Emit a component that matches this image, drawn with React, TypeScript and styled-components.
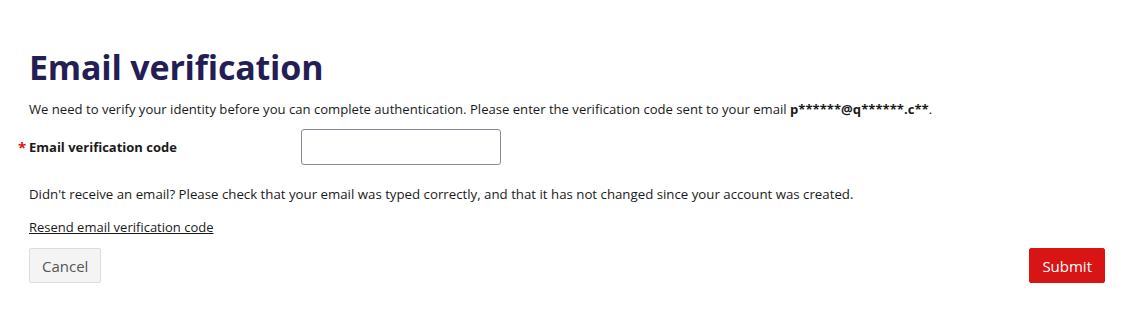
import React from 'react';
import styled, { createGlobalStyle } from 'styled-components';

const GlobalStyle = createGlobalStyle`
  body {
    margin: 0;
    background: #ffffff;
    font-family: "Segoe UI", "Open Sans", "Liberation Sans", sans-serif;
    color: #1a1a1a;
  }
`;

const Page = styled.div`
  padding: 41px 30px 0 29px;
  width: 1135px;
  box-sizing: border-box;
`;

const Title = styled.h1`
  margin: 0;
  font-size: 34px;
  letter-spacing: -0.2px;
  line-height: 52px;
  font-weight: 700;
  color: #241e55;
`;

const Intro = styled.p`
  margin: 6px 0 0;
  font-size: 13.1px;
  line-height: 20px;
`;

const Row = styled.div`
  display: flex;
  align-items: center;
  margin-top: 10px;
`;

const Label = styled.label`
  position: relative;
  width: 272px;
  font-size: 13px;
  font-weight: 700;

  &::before {
    content: '*';
    position: absolute;
    left: -11px;
    top: -1px;
    color: #e01010;
    font-size: 15px;
  }
`;

const Input = styled.input`
  width: 200px;
  height: 36px;
  box-sizing: border-box;
  border: 1px solid #8a8a96;
  border-radius: 3px;
  padding: 0 8px;
  font: inherit;
`;

const Help = styled.p`
  margin: 19px 0 0;
  font-size: 13.25px;
  line-height: 20px;
`;

const Resend = styled.a`
  display: inline-block;
  margin-top: 13px;
  font-size: 13px;
  line-height: 20px;
  color: #1a1a1a;
  text-decoration: underline;
`;

const Actions = styled.div`
  display: flex;
  justify-content: space-between;
  margin-top: 11px;
`;

const Button = styled.button<{ $primary?: boolean }>`
  height: 35px;
  padding: 0 12px;
  border-radius: 2px;
  font-family: inherit;
  font-size: 15px;
  cursor: pointer;
  border: 1px solid ${(p) => (p.$primary ? '#d91414' : '#dcdcdc')};
  background: ${(p) => (p.$primary ? '#d91414' : '#f4f4f4')};
  color: ${(p) => (p.$primary ? '#ffffff' : '#555555')};
`;

export default function App() {
  return (
    <>
      <GlobalStyle />
      <Page>
        <Title>Email verification</Title>
        <Intro>
          We need to verify your identity before you can complete authentication. Please enter the verification
          code sent to your email <b>p******@q******.c**</b>.
        </Intro>
        <Row>
          <Label htmlFor="code">Email verification code</Label>
          <Input id="code" type="text" />
        </Row>
        <Help>
          Didn't receive an email? Please check that your email was typed correctly, and that it has not changed
          since your account was created.
        </Help>
        <Resend href="#">Resend email verification code</Resend>
        <Actions>
          <Button>Cancel</Button>
          <Button $primary>Submit</Button>
        </Actions>
      </Page>
    </>
  );
}
